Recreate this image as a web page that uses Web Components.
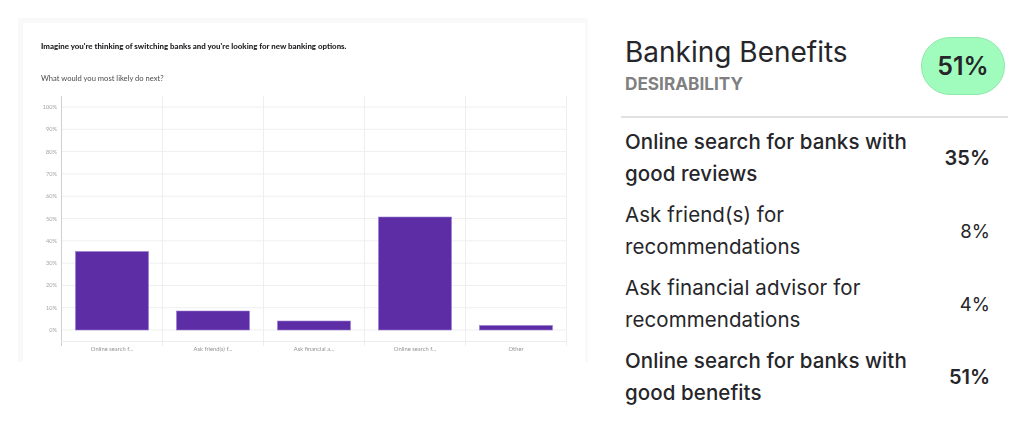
<!DOCTYPE html>
<html lang="en">
<head>
<meta charset="utf-8">
<title>Banking Benefits</title>
<style>
html,body{margin:0;padding:0;background:#fff}
body{width:1024px;height:429px;overflow:hidden}
</style>
</head>
<body>
<result-page>
  <survey-card slot="card"
    heading="Imagine you're thinking of switching banks and you're looking for new banking options."
    question="What would you most likely do next?"></survey-card>
  <result-panel slot="panel" title-text="Banking Benefits" kicker="DESIRABILITY" score="51%">
    <result-row value="35%" strong>Online search for banks with good reviews</result-row>
    <result-row value="8%">Ask friend(s) for recommendations</result-row>
    <result-row value="4%">Ask financial advisor for recommendations</result-row>
    <result-row value="51%" strong>Online search for banks with good benefits</result-row>
  </result-panel>
</result-page>
<script>
class ResultPage extends HTMLElement{
  constructor(){super();this.attachShadow({mode:'open'}).innerHTML=`
  <style>
  :host{display:flex;align-items:flex-start;padding:18px 16px 0 18px;box-sizing:border-box;width:1024px;height:429px;gap:33px}
  </style>
  <slot name="card"></slot><slot name="panel"></slot>`;}
}
class BarChart extends HTMLElement{
  constructor(){super();
    const ys=[107,129.3,151.6,173.9,196.2,218.5,240.8,263.1,285.4,307.7,330];
    const labels=['100%','90%','80%','70%','60%','50%','40%','30%','20%','10%','0%'];
    const xs=[61.5,162.5,263.5,364.5,465.5,566.5];
    const bars=[[75.5,251.5,'Online search f...'],[176.5,311,'Ask friend(s) f...'],[277.5,321,'Ask financial a...'],[378.5,217,'Online search f...'],[479.5,325.5,'Other']];
    let s='';
    ys.forEach((y,i)=>{
      s+=`<line x1="61" x2="566.5" y1="${y}" y2="${y}" stroke="#efeff0" stroke-width="1"/>`;
      s+=`<text x="57" y="${y+2}" text-anchor="end" class="tick">${labels[i]}</text>`;
    });
    xs.forEach((x,i)=>{
      s+=`<line x1="${x}" x2="${x}" y1="96" y2="346" stroke="${i?'#eeeeef':'#cfcfd2'}" stroke-width="1"/>`;
    });
    s+=`<line x1="61" x2="566.5" y1="341.5" y2="341.5" stroke="#ececee"/>`;
    bars.forEach(b=>{
      s+=`<rect x="${b[0]}" y="${b[1]}" width="73" height="${330-b[1]}" fill="#5c2da5" stroke="#9c7ed0" stroke-width=".6"/>`;
      s+=`<text x="${b[0]+36.5}" y="351" text-anchor="middle" class="cat">${b[2]}</text>`;
    });
    this.attachShadow({mode:'open'}).innerHTML=`
    <style>
    :host{display:block;width:562px;height:267px}
    svg{display:block}
    text{font-family:Lato,"Liberation Sans",sans-serif}
    .tick{font-size:5.6px;fill:#a4a4a8}
    .cat{font-size:5.8px;fill:#949498}
    </style>
    <svg width="562" height="267" viewBox="23 96 562 267" xmlns="http://www.w3.org/2000/svg">${s}</svg>`;
  }
}
class SurveyCard extends HTMLElement{
  constructor(){super();this.attachShadow({mode:'open'}).innerHTML=`
  <style>
  :host{display:block;box-sizing:border-box;width:570px;height:344px;background:#fff;
    border:solid #f9f9f9;border-width:5px 3px 0 5px;font-family:Lato,"Liberation Sans",sans-serif;overflow:hidden}
  .in{filter:blur(.45px);display:flex;flex-direction:column}
  h2{margin:18px 0 0 18px;font-size:7.9px;line-height:10px;font-weight:900;color:#222226}
  p{margin:21.5px 0 0 18px;font-size:7.6px;line-height:10px;color:#4c4c50}
  bar-chart{margin-top:13px}
  </style>
  <div class="in"><h2></h2><p></p><bar-chart></bar-chart></div>`;
  this.shadowRoot.querySelector('h2').textContent=this.getAttribute('heading');
  this.shadowRoot.querySelector('p').textContent=this.getAttribute('question');}
}
class ResultPanel extends HTMLElement{
  constructor(){super();this.attachShadow({mode:'open'}).innerHTML=`
  <style>
  :host{display:block;width:387px;font-family:Inter,"Liberation Sans",sans-serif;color:#26262a}
  header{display:flex;justify-content:space-between;align-items:flex-start;height:100px;box-sizing:border-box;border-bottom:2px solid #e1e1e1;padding:0 3px 0 4px}
  h1{margin:17px 0 0;font-size:28px;line-height:34px;font-weight:400}
  .k{font-size:17.2px;line-height:20px;font-weight:700;color:#808080;margin-top:5px}
  .pill{margin-top:19px;width:84px;height:58px;box-sizing:border-box;border-radius:29px;background:#a0fcbc;border:1px solid #90e8ab;
    display:flex;align-items:center;justify-content:center;font-size:25px;font-weight:600}
  .rows{display:flex;flex-direction:column;gap:9px;padding:8px 18px 0 4px}
  </style>
  <header><div><h1></h1><div class="k"></div></div><div class="pill"></div></header>
  <div class="rows"><slot></slot></div>`;
  const r=this.shadowRoot;
  r.querySelector('h1').textContent=this.getAttribute('title-text');
  r.querySelector('.k').textContent=this.getAttribute('kicker');
  r.querySelector('.pill').textContent=this.getAttribute('score');}
}
class ResultRow extends HTMLElement{
  constructor(){super();this.attachShadow({mode:'open'}).innerHTML=`
  <style>
  :host{display:flex;align-items:center;justify-content:space-between;font-size:20.5px;line-height:32px;font-weight:400;letter-spacing:.08px}
  :host([strong]){font-weight:450}
  .t{width:300px}
  .v{font-size:18.5px;letter-spacing:.1px}
  :host([strong]) .v{font-size:20px;font-weight:600;letter-spacing:0}
  </style>
  <div class="t"><slot></slot></div><div class="v"></div>`;
  this.shadowRoot.querySelector('.v').textContent=this.getAttribute('value');}
}
customElements.define('result-page',ResultPage);
customElements.define('bar-chart',BarChart);
customElements.define('survey-card',SurveyCard);
customElements.define('result-panel',ResultPanel);
customElements.define('result-row',ResultRow);
</script>
</body>
</html>
